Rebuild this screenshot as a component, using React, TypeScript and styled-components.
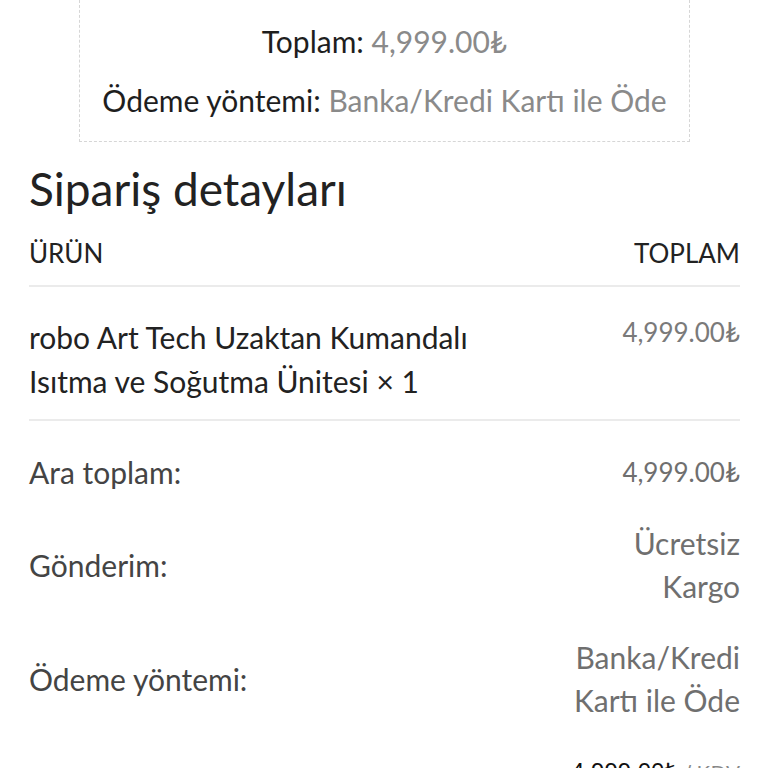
import React from "react";
import styled, { createGlobalStyle } from "styled-components";

const Global = createGlobalStyle`
  html, body { margin: 0; padding: 0; background: #fff; }
  body { font-family: Lato, "Noto Sans", sans-serif; color: #222; overflow: hidden; }
`;

const Page = styled.div`
  padding: 0 28px 0 29px;
  height: 768px;
  overflow: hidden;
`;

const OverviewBox = styled.ul`
  list-style: none;
  margin: 0 50px;
  padding: 12px 0 11px;
  border: 1px dashed #d6d6d6;
  border-top: none;
  text-align: center;
`;

const OverviewItem = styled.li`
  font-size: 30px;
  line-height: 59px;
  color: #1e1e1e;
`;

const Muted = styled.span`
  color: #8a8a8a;
`;

const Heading = styled.h2`
  margin: 20px 0 8px;
  font-size: 46px;
  font-weight: 400;
  line-height: 54px;
  color: #222;
`;

const Table = styled.div`
  display: grid;
  grid-template-columns: 1fr 172px;
`;

const HeadCell = styled.div<{ $right?: boolean }>`
  padding: 14px 0 17px;
  line-height: 30px;
  font-size: 26px;
  color: #222;
  text-align: ${(p) => (p.$right ? "right" : "left")};
  border-bottom: 2px solid #ebebeb;
`;

const ProductName = styled.div`
  padding: 28px 0 16px;
  font-size: 30px;
  line-height: 44px;
  color: #222;
  border-bottom: 2px solid #ebebeb;
  white-space: nowrap;
`;

const ProductPrice = styled.div`
  padding: 28px 0 16px;
  font-size: 26px;
  line-height: 34px;
  color: #7a7a7a;
  text-align: right;
  border-bottom: 2px solid #ebebeb;
`;

const Label = styled.div<{ $first?: boolean }>`
  padding: ${(p) => (p.$first ? "30px" : "14px")} 0 14px;
  font-size: 30px;
  line-height: 43px;
  color: #444;
  display: flex;
  align-items: center;
`;

const Value = styled.div<{ $first?: boolean; $small?: boolean }>`
  padding: ${(p) => (p.$first ? "30px" : "14px")} 0 14px;
  font-size: ${(p) => (p.$small ? "26px" : "30px")};
  line-height: 43px;
  color: #6f6f6f;
  text-align: right;
`;

const TotalValue = styled.div`
  padding: 14px 0 14px;
  font-family: "Liberation Sans", Arial, sans-serif;
  font-size: 24px;
  line-height: 43px;
  color: #111;
  text-align: right;
  white-space: nowrap;
`;

const Tax = styled.small`
  font-size: 21px;
  color: #888;
`;

export default function App() {
  return (
    <>
      <Global />
      <Page>
        <OverviewBox>
          <OverviewItem>
            Toplam: <Muted>4,999.00₺</Muted>
          </OverviewItem>
          <OverviewItem>
            Ödeme yöntemi: <Muted>Banka/Kredi Kartı ile Öde</Muted>
          </OverviewItem>
        </OverviewBox>
        <Heading>Sipariş detayları</Heading>
        <Table>
          <HeadCell>ÜRÜN</HeadCell>
          <HeadCell $right>TOPLAM</HeadCell>
          <ProductName>
            robo Art Tech Uzaktan Kumandalı
            <br />
            Isıtma ve Soğutma Ünitesi × 1
          </ProductName>
          <ProductPrice>4,999.00₺</ProductPrice>
          <Label $first>Ara toplam:</Label>
          <Value $first $small>
            4,999.00₺
          </Value>
          <Label>Gönderim:</Label>
          <Value>Ücretsiz Kargo</Value>
          <Label>Ödeme yöntemi:</Label>
          <Value>Banka/Kredi Kartı ile Öde</Value>
          <Label>Toplam:</Label>
          <TotalValue>
            4,999.00₺ <Tax>/ KDV</Tax>
            <br />
            <Tax>dahil</Tax>
          </TotalValue>
        </Table>
      </Page>
    </>
  );
}
